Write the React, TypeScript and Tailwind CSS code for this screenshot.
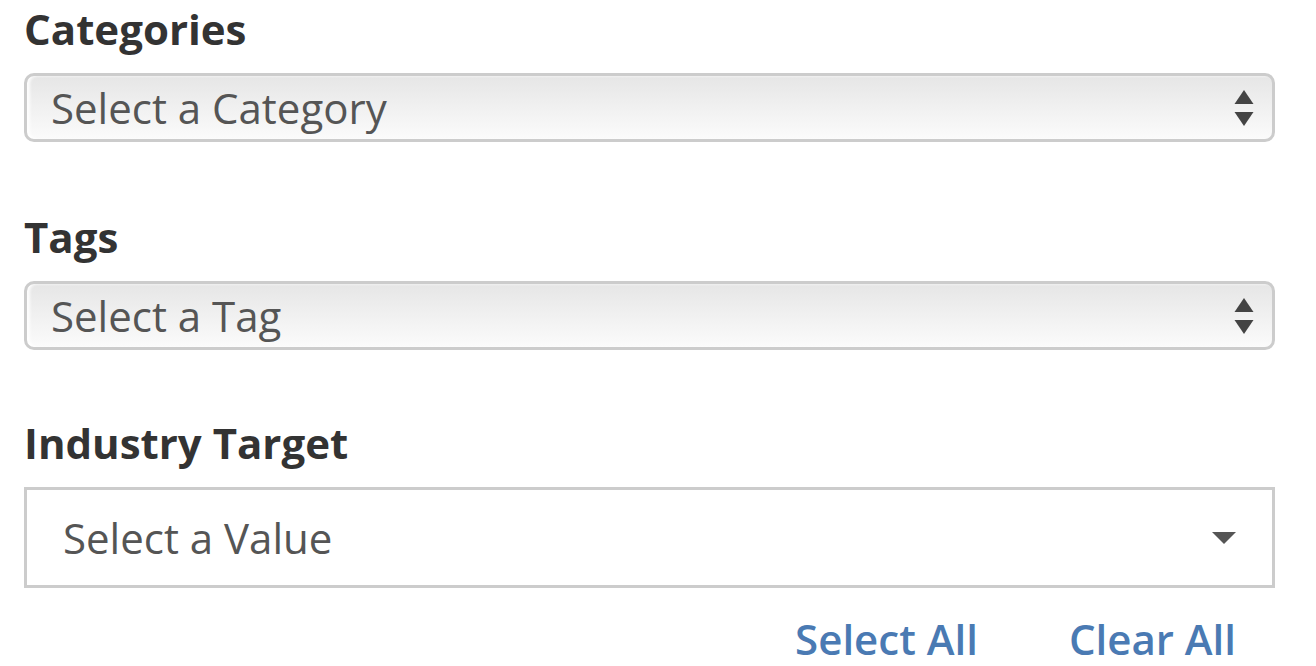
import type { ReactNode } from "react";

const FONT = { fontFamily: '"Open Sans", "Liberation Sans", sans-serif' };

function Label({ children }: { children: ReactNode }) {
  return (
    <div className="h-[60px] text-[42px] leading-[58px] font-bold text-[#333333]">
      {children}
    </div>
  );
}

// Native-looking select with gradient and up/down arrows
function GradientSelect({ placeholder }: { placeholder: string }) {
  return (
    <div className="mt-[13px] h-[69px] flex items-center justify-between rounded-[10px] border-[3px] border-[#cccccc] bg-gradient-to-b from-[#e6e6e6] to-[#fbfbfb] shadow-[inset_3px_0_3px_rgba(255,255,255,0.9)] pl-[24px] pr-[18px]">
      <span className="text-[42px] text-[#555555] leading-none">{placeholder}</span>
      <svg width="20" height="38" viewBox="0 0 20 38" className="text-[#444444]">
        <path d="M10 1 L19.5 15 L0.5 15 Z" fill="currentColor" />
        <path d="M0.5 23 L19.5 23 L10 37 Z" fill="currentColor" />
      </svg>
    </div>
  );
}

export default function App() {
  return (
    <div className="bg-white w-[1316px] h-[666px] overflow-hidden pl-[24px] pr-[41px]" style={FONT}>
      {/* Categories */}
      <div className="mb-[66px]">
        <Label>Categories</Label>
        <GradientSelect placeholder="Select a Category" />
      </div>

      {/* Tags */}
      <div className="mb-[64px]">
        <Label>Tags</Label>
        <GradientSelect placeholder="Select a Tag" />
      </div>

      {/* Industry Target */}
      <div>
        <Label>Industry Target</Label>
        <div className="mt-[13px] h-[101px] flex items-center justify-between border-[3px] border-[#cccccc] bg-white pl-[36px] pr-[36px]">
          <span className="text-[42px] text-[#555555] leading-none">Select a Value</span>
          <svg width="24" height="12" viewBox="0 0 24 12" className="text-[#555555]">
            <path d="M0 0 L24 0 L12 12 Z" fill="currentColor" />
          </svg>
        </div>
        <div className="flex justify-end gap-[91px] pr-[39px] mt-[29px]">
          <a className="text-[42px] leading-[44px] font-semibold text-[#4a7ab3] cursor-pointer">Select All</a>
          <a className="text-[42px] leading-[44px] font-semibold text-[#4a7ab3] cursor-pointer">Clear All</a>
        </div>
      </div>
    </div>
  );
}
